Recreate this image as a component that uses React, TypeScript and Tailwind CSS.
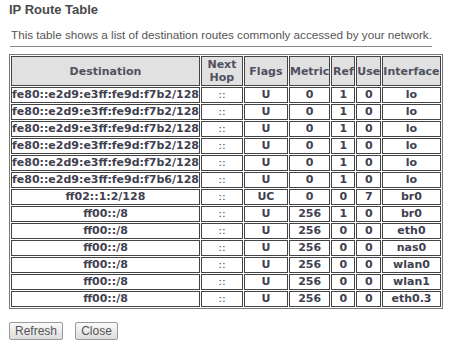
const routes = [
  ['fe80::e2d9:e3ff:fe9d:f7b2/128', '::', 'U', '0', '1', '0', 'lo'],
  ['fe80::e2d9:e3ff:fe9d:f7b2/128', '::', 'U', '0', '1', '0', 'lo'],
  ['fe80::e2d9:e3ff:fe9d:f7b2/128', '::', 'U', '0', '1', '0', 'lo'],
  ['fe80::e2d9:e3ff:fe9d:f7b2/128', '::', 'U', '0', '1', '0', 'lo'],
  ['fe80::e2d9:e3ff:fe9d:f7b2/128', '::', 'U', '0', '1', '0', 'lo'],
  ['fe80::e2d9:e3ff:fe9d:f7b6/128', '::', 'U', '0', '1', '0', 'lo'],
  ['ff02::1:2/128', '::', 'UC', '0', '0', '7', 'br0'],
  ['ff00::/8', '::', 'U', '256', '1', '0', 'br0'],
  ['ff00::/8', '::', 'U', '256', '0', '0', 'eth0'],
  ['ff00::/8', '::', 'U', '256', '0', '0', 'nas0'],
  ['ff00::/8', '::', 'U', '256', '0', '0', 'wlan0'],
  ['ff00::/8', '::', 'U', '256', '0', '0', 'wlan1'],
  ['ff00::/8', '::', 'U', '256', '0', '0', 'eth0.3'],
];

const cols = [185, 42, 44, 41, 24, 25, 58];

export default function App() {
  return (
    <div className="bg-white w-[449px] h-[350px] pl-[9px] pt-[2px] text-[#444]">
      <h1 className="font-['Liberation_Sans',sans-serif] font-bold text-[13px] leading-[16px] text-[#4a4a4a]">
        IP Route Table
      </h1>
      <p className="font-['Liberation_Sans',sans-serif] text-[11.7px] leading-[14px] mt-[10px] pl-[2px] text-[#555]">
        This table shows a list of destination routes commonly accessed by your network.
      </p>
      <div className="ml-[1px] mt-[4px] w-[422px] h-px bg-[#888]" />
      <table className="mt-[7px] table-fixed border-separate border-spacing-[1px] border border-[#777] font-['DejaVu_Sans',sans-serif] font-bold text-[11px] text-[#3f4150]">
        <colgroup>
          {cols.map((w, i) => (
            <col key={i} style={{ width: w }} />
          ))}
        </colgroup>
        <thead>
          <tr>
            {['Destination', 'Next Hop', 'Flags', 'Metric', 'Ref', 'Use', 'Interface'].map((h) => (
              <th
                key={h}
                className="h-[30px] p-0 border border-[#444] bg-[#e1e1e1] text-center leading-[13px] text-[#505060]"
              >
                {h === 'Next Hop' ? (
                  <>
                    Next
                    <br />
                    Hop
                  </>
                ) : (
                  h
                )}
              </th>
            ))}
          </tr>
        </thead>
        <tbody>
          {routes.map((r, i) => (
            <tr key={i}>
              {r.map((c, j) => (
                <td
                  key={j}
                  className={`h-[16px] p-0 border border-[#444] leading-[14px] whitespace-nowrap ${
                    j === 0 && i < 6 ? 'text-left' : 'text-center'
                  } ${j === 1 ? 'font-normal' : ''}`}
                >
                  {c}
                </td>
              ))}
            </tr>
          ))}
        </tbody>
      </table>
      <div className="flex gap-[12px] mt-[13px] font-['Liberation_Sans',sans-serif] text-[12px]">
        <button className="w-[54px] h-[18px] border border-[#999] rounded-[2px] bg-gradient-to-b from-[#fafafa] to-[#dcdcdc] text-[#555] leading-[16px]">
          Refresh
        </button>
        <button className="w-[43px] h-[18px] border border-[#999] rounded-[2px] bg-gradient-to-b from-[#fafafa] to-[#dcdcdc] text-[#555] leading-[16px]">
          Close
        </button>
      </div>
    </div>
  );
}
